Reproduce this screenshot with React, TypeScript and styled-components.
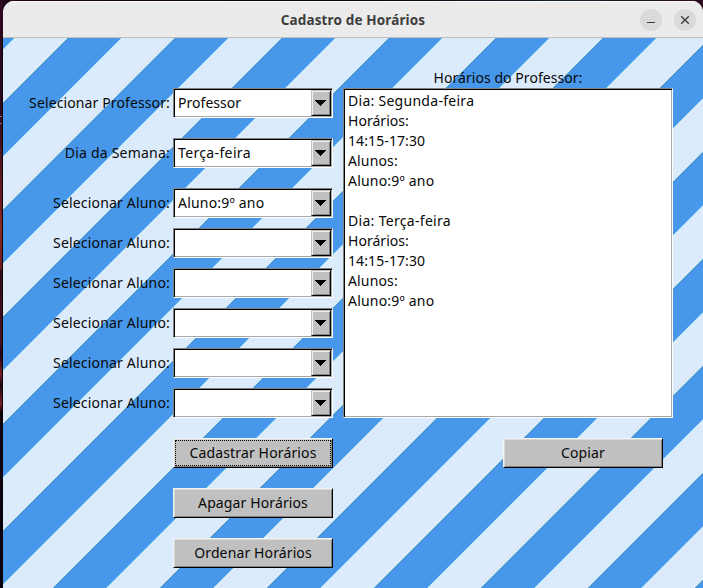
import React from 'react';
import styled, { createGlobalStyle, css } from 'styled-components';

const GlobalStyle = createGlobalStyle`
  * { box-sizing: border-box; }
  html, body { margin: 0; padding: 0; }
  body { overflow: hidden; background: #1e0619; }
`;

const Desktop = styled.div`
  width: 703px;
  height: 588px;
  padding: 1px 0 0 3px;
  background:
    linear-gradient(#8d7f8a, #8d7f8a) 0 116px / 2px 1px no-repeat,
    linear-gradient(#8d7f8a, #8d7f8a) 0 123px / 2px 1px no-repeat,
    linear-gradient(to right, transparent 2px, #0a0006 2px) 0 38px / 3px 550px no-repeat,
    linear-gradient(#2b0a1e 0, #2b0a1e 110px, #4a1320 150px, #6b1a22 200px, #8f2a20 225px, #6b1a20 269px, #2e0b1c 271px, #4a1226 340px, #1a0518 355px, #7a1e24 375px, #1a0518 385px, #7a1e24 404px, #14030f 412px, #05000a 588px) 0 0 / 3px 588px no-repeat,
    linear-gradient(to right, #1e0619, #0a0310 50%, #12222c 80%, #2b0a1e) 0 0 / 703px 12px no-repeat;
`;

const Window = styled.main`
  display: flex;
  flex-direction: column;
  width: 700px;
  height: 587px;
  border-radius: 11px 11px 0 0;
  overflow: hidden;
  font-family: 'Noto Sans', 'Open Sans', sans-serif;
  font-size: 14px;
  line-height: 20px;
  color: #080808;
`;

const TitleBar = styled.header`
  display: grid;
  grid-template-columns: 80px 1fr 80px;
  align-items: center;
  flex: none;
  height: 37px;
  background: #ebebeb;
  border-top: 1px solid #fafafa;
  border-bottom: 1px solid #bfbfbf;
`;

const Title = styled.h1`
  grid-column: 2;
  margin: 0;
  text-align: center;
  font: 700 13.5px/20px 'Noto Sans', sans-serif;
  letter-spacing: 0.14px;
  color: #3d3d3d;
`;

const WindowControls = styled.div`
  display: flex;
  justify-content: flex-end;
  gap: 12px;
  padding-right: 7px;
`;

const RoundButton = styled.button`
  display: flex;
  width: 22px;
  height: 22px;
  padding: 0;
  border: 0;
  border-radius: 50%;
  background: #dadada;
`;

const Client = styled.section`
  display: grid;
  grid-template-columns: 167px 160px 330px;
  column-gap: 3px;
  align-content: start;
  flex: 1;
  padding-top: 30px;
  background: repeating-linear-gradient(
    135deg,
    #4797ea 0, #4797ea 7.6px,
    #c8f1f8 8.2px, #dcebfb 9.4px,
    #dcebfb 44.7px, #c8f1f8 45.6px,
    #4588c4 46.1px, #4797ea 47.2px,
    #4797ea 75.66px
  );
`;

const Labels = styled.div`
  display: flex;
  flex-direction: column;
  padding-top: 20px;
`;

const Fields = styled(Labels)``;

const gap = css<{ $gap: number }>`margin-bottom: ${p => p.$gap}px;`;

const Text = styled.span<{ $track: number }>`
  letter-spacing: ${p => p.$track}px;
`;

const Label = styled.label<{ $gap: number }>`
  height: 30px;
  line-height: 30px;
  text-align: right;
  white-space: nowrap;
  ${gap}
`;

const sunken = css`
  border: 1px solid;
  border-color: #828282 #fff #fff #828282;
  background: #fff;
  box-shadow: inset 1px 1px #000, inset -1px -1px #a8a8a8;
`;

const Combo = styled.div<{ $gap: number }>`
  display: flex;
  height: 30px;
  padding: 1px;
  ${sunken}
  ${gap}
`;

const ComboValue = styled.span`
  flex: 1;
  padding-left: 3px;
  line-height: 26px;
  white-space: pre;
`;

const raised = css`
  border: 1px solid;
  border-color: #f4f4f4 #000 #000 #f4f4f4;
  background: #c0c0c0;
  box-shadow: inset 1px 1px #d8d8d8, inset -1px -1px #828282;
`;

const DropButton = styled.button`
  display: flex;
  width: 20px;
  height: 26px;
  padding: 0;
  ${raised}
  border-color: #c0c0c0 #000 #000 #c0c0c0;
  box-shadow: inset 1px 1px #f0f0f0, inset -1px -1px #828282;
`;

const Action = styled.button<{ $focused?: boolean }>`
  width: 160px;
  height: 30px;
  margin-bottom: 20px;
  padding: 0;
  font: inherit;
  color: inherit;
  ${raised}
  ${p => p.$focused && css`
    outline: 1px dotted #000;
    outline-offset: -3px;
  `}
`;

const Actions = styled.div`
  display: flex;
  flex-direction: column;
`;

const Schedule = styled.div`
  display: flex;
  flex-direction: column;
  padding-left: 7px;
  width: 337px;
`;

const Heading = styled.div`
  height: 20px;
  text-align: center;
`;

const Listing = styled.div`
  height: 330px;
  margin: 0 0 20px;
  padding: 2px 4px;
  ${sunken}
`;

const Line = styled.div<{ $track: number }>`
  height: 20px;
  letter-spacing: ${p => p.$track}px;
`;

const CopyRow = styled.div`
  display: flex;
  justify-content: flex-end;
  padding-right: 10px;
`;

const student = { label: 'Selecionar Aluno:', labelTrack: 0.18, value: '', track: 0, gap: 10 };

const rows = [
  { label: 'Selecionar Professor:', labelTrack: 0.12, value: 'Professor', track: 0.04, gap: 20 },
  { label: 'Dia da Semana:', labelTrack: 0.22, value: 'Terça-feira', track: 0.36, gap: 20 },
  { ...student, value: 'Aluno:9º ano', track: 0.2 },
  student,
  student,
  student,
  student,
  { ...student, gap: 20 },
];

const dayLines = (day: string, track: number) => [
  { text: `Dia: ${day}`, track },
  { text: 'Horários:', track: 0.04 },
  { text: '14:15-17:30', track: 0.1 },
  { text: 'Alunos:', track: 0.15 },
  { text: 'Aluno:9º ano', track: 0.2 },
];

const schedule = [
  ...dayLines('Segunda-feira', 0.28),
  { text: '', track: 0 },
  ...dayLines('Terça-feira', 0.31),
];

export default function App() {
  return (
    <>
      <GlobalStyle />
      <Desktop>
        <Window>
          <TitleBar>
            <Title>Cadastro de Horários</Title>
            <WindowControls>
              <RoundButton aria-label="Minimizar">
                <svg width="22" height="22"><path d="M7 13.5h8" stroke="#3d3d3d" strokeWidth="1.2" /></svg>
              </RoundButton>
              <RoundButton aria-label="Fechar">
                <svg width="22" height="22"><path d="M7.2 7.2l7.6 7.6M14.8 7.2l-7.6 7.6" stroke="#3d3d3d" strokeWidth="1.4" /></svg>
              </RoundButton>
            </WindowControls>
          </TitleBar>
          <Client>
            <Labels>
              {rows.map((r, i) => (
                <Label key={i} $gap={r.gap}><Text $track={r.labelTrack}>{r.label}</Text></Label>
              ))}
            </Labels>
            <Fields>
              {rows.map((r, i) => (
                <Combo key={i} $gap={r.gap}>
                  <ComboValue><Text $track={r.track}>{r.value}</Text></ComboValue>
                  <DropButton aria-label="Abrir lista">
                    <svg width="18" height="24"><path d="M3 9h11v1h-1v1h-1v1h-1v1h-1v1h-1v1h-1v-1h-1v-1h-1v-1h-1v-1h-1v-1h-1z" fill="#000" /></svg>
                  </DropButton>
                </Combo>
              ))}
              <Actions>
                <Action $focused><Text $track={0.15}>Cadastrar Horários</Text></Action>
                <Action><Text $track={0.12}>Apagar Horários</Text></Action>
                <Action><Text $track={0.12}>Ordenar Horários</Text></Action>
              </Actions>
            </Fields>
            <Schedule>
              <Heading><Text $track={0.05}>Horários do Professor:</Text></Heading>
              <Listing>
                {schedule.map((l, i) => <Line key={i} $track={l.track}>{l.text}</Line>)}
              </Listing>
              <CopyRow><Action><Text $track={0.15}>Copiar</Text></Action></CopyRow>
            </Schedule>
          </Client>
        </Window>
      </Desktop>
    </>
  );
}
